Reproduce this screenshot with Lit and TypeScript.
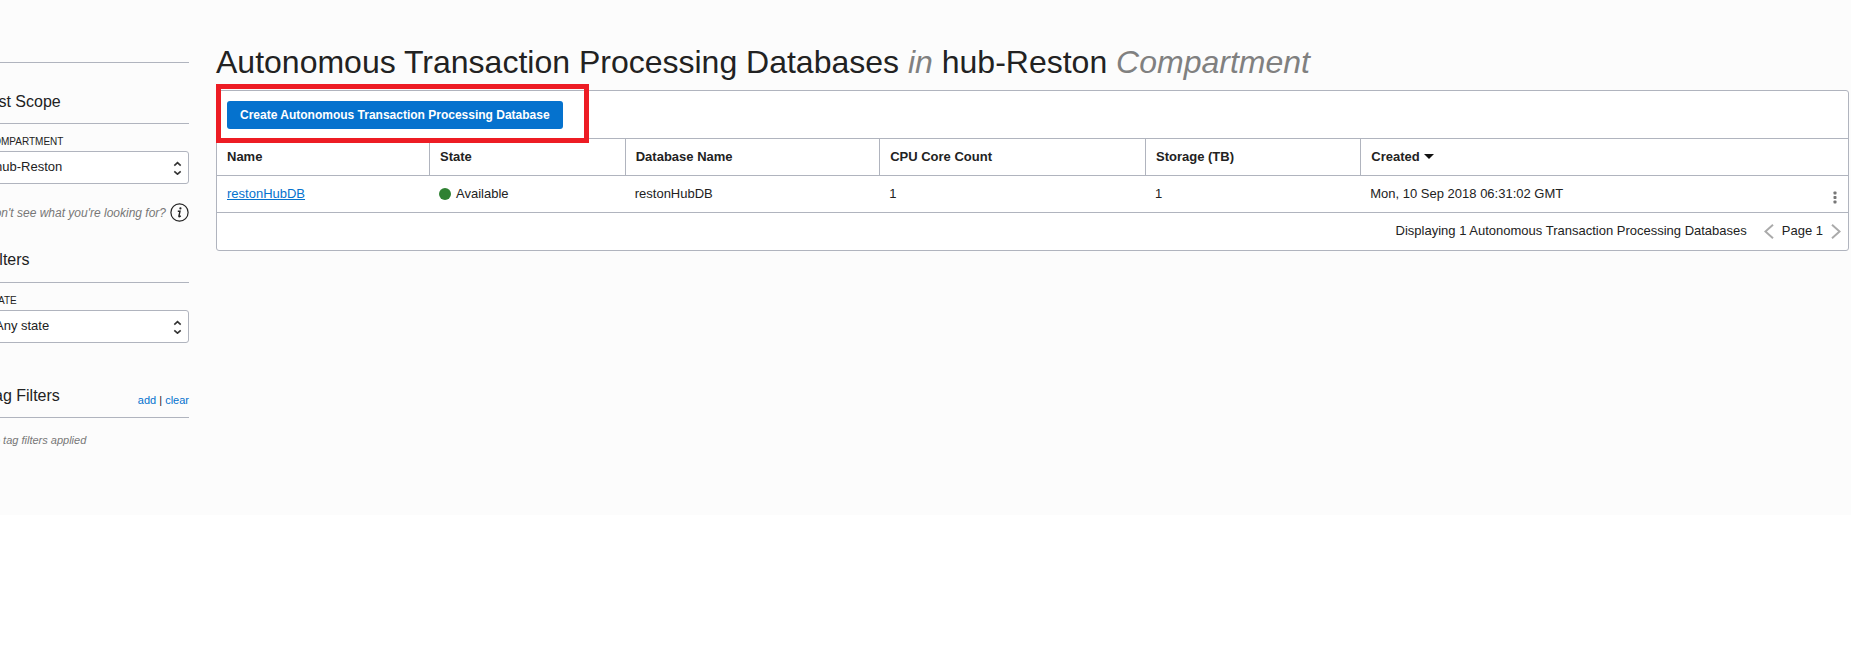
import { LitElement, html, css } from "lit";
import { customElement, property } from "lit/decorators.js";

@customElement("scope-select")
class ScopeSelect extends LitElement {
  @property() label = "";
  @property() value = "";

  static styles = css`
    :host {
      display: block;
    }
    .label {
      display: block;
      font-size: 10px;
      line-height: 12px;
      text-transform: uppercase;
      margin-bottom: 3px;
    }
    .box {
      display: grid;
      align-items: center;
    }
    .select {
      grid-area: 1 / 1;
      appearance: none;
      width: 100%;
      height: 33px;
      margin: 0;
      padding: 0 28px 2px 8px;
      border: 1px solid #b0b4be;
      border-radius: 3px;
      background: #fff;
      color: #222;
      font: inherit;
      font-size: 13px;
    }
    .arrows {
      grid-area: 1 / 1;
      justify-self: end;
      margin-right: 7px;
      pointer-events: none;
    }
  `;

  render() {
    return html`
      <label class="label" for="field">${this.label}</label>
      <div class="box">
        <select class="select" id="field">
          <option>${this.value}</option>
        </select>
        <svg class="arrows" width="9" height="14" viewBox="0 0 9 14" fill="none" stroke="#333" stroke-width="1.6">
          <path d="M1.3 4.6 4.5 1.6 7.7 4.6M1.3 10.4 4.5 13.2 7.7 10.4" />
        </svg>
      </div>
    `;
  }
}

interface Database {
  name: string;
  state: string;
  dbName: string;
  cores: number;
  storage: number;
  created: string;
}

@customElement("app-root")
class AppRoot extends LitElement {
  private rows: Database[] = [
    {
      name: "restonHubDB",
      state: "Available",
      dbName: "restonHubDB",
      cores: 1,
      storage: 1,
      created: "Mon, 10 Sep 2018 06:31:02 GMT",
    },
  ];

  static styles = css`
    :host {
      display: block;
      min-height: 100vh;
      overflow-x: hidden;
      background: #fff;
      color: #222;
      font-family: "Liberation Sans", Arial, sans-serif;
      font-size: 13px;
      line-height: 16px;
    }
    .page {
      display: flex;
      gap: 27px;
      box-sizing: border-box;
      padding: 40px 2px 68px 0;
      background: #fcfcfc;
    }
    .side {
      flex: none;
      width: 203px;
      margin-left: -14px;
      padding-top: 22px;
    }
    .heading {
      display: flex;
      align-items: flex-end;
      justify-content: space-between;
      margin: 0;
      border-bottom: 1px solid #b0b4be;
      font-size: 16px;
      font-weight: normal;
      line-height: 20px;
    }
    .scope {
      border-top: 1px solid #b0b4be;
      padding: 29px 0 11px;
    }
    .filters {
      padding: 28px 0 12px;
    }
    .tags {
      padding: 43px 0 11px;
    }
    .field {
      margin-top: 12px;
    }
    .hint {
      display: flex;
      align-items: center;
      justify-content: space-between;
      margin-top: 19px;
      color: #777;
      font-size: 12px;
      font-style: italic;
      white-space: nowrap;
    }
    .info {
      display: block;
      padding: 0;
      border: 0;
      background: none;
    }
    .info svg {
      display: block;
    }
    .links {
      font-size: 11px;
      line-height: 12px;
    }
    .none {
      margin: 15px 0 0;
      color: #777;
      font-size: 11px;
      font-style: italic;
      line-height: 14px;
    }
    .link {
      color: #0572ce;
      text-decoration: none;
    }
    .underlined {
      text-decoration: underline;
    }
    .main {
      flex: 1;
      min-width: 0;
    }
    .title {
      margin: 0 0 6px;
      font-size: 32px;
      font-weight: normal;
      line-height: 44px;
      white-space: nowrap;
    }
    .soft {
      color: #808080;
    }
    .panel {
      border: 1px solid #b0b4be;
      border-radius: 3px;
      background: #fff;
    }
    .toolbar {
      display: flex;
      padding: 10px 10px 9px;
    }
    .callout {
      position: relative;
    }
    .callout::after {
      content: "";
      position: absolute;
      inset: -17px -26px -14px -11px;
      border: 5px solid #ed1c24;
      pointer-events: none;
    }
    .create {
      display: block;
      height: 28px;
      padding: 0 13px 1px;
      border: 0;
      border-radius: 3px;
      background: #0572ce;
      color: #fff;
      font: inherit;
      font-size: 12px;
      font-weight: bold;
      white-space: nowrap;
    }
    .table {
      width: 100%;
      table-layout: fixed;
      border-collapse: separate;
      border-spacing: 0;
      border-top: 1px solid #b0b4be;
    }
    .th,
    .td {
      box-sizing: border-box;
      height: 37px;
      padding: 0 10px;
      border-bottom: 1px solid #b0b4be;
      text-align: left;
      white-space: nowrap;
    }
    .th + .th {
      border-left: 1px solid #b0b4be;
    }
    .th.plain {
      border-left: 0;
    }
    .c-name {
      width: 13%;
    }
    .c-state {
      width: 12%;
    }
    .c-db {
      width: 15.6%;
    }
    .c-cpu {
      width: 16.3%;
    }
    .c-storage {
      width: 13.2%;
    }
    .c-menu {
      width: 28px;
    }
    .caret {
      margin-left: 1px;
      vertical-align: 2px;
    }
    .state {
      display: flex;
      align-items: center;
      gap: 5px;
    }
    .dot {
      width: 12px;
      height: 12px;
      border-radius: 50%;
      background: #2f8132;
    }
    .menu-cell {
      padding: 6px 7px 0 9px;
    }
    .icon {
      display: block;
      padding: 0;
      border: 0;
      background: none;
    }
    .icon svg {
      display: block;
    }
    .foot {
      display: flex;
      align-items: center;
      justify-content: flex-end;
      height: 37px;
      box-sizing: border-box;
      padding: 0 7px 1px 10px;
    }
    .count {
      margin-right: 17px;
    }
    .pager {
      display: flex;
      align-items: center;
      gap: 8px;
    }
  `;

  render() {
    return html`
      <div class="page">
        <aside class="side">
          <h2 class="heading scope">List Scope</h2>
          <scope-select class="field" label="Compartment" value="hub-Reston"></scope-select>
          <div class="hint">
            <span>Don't see what you're looking for?</span>
            <button class="info" aria-label="More information">
              <svg width="19" height="19" viewBox="0 0 19 19">
                <circle cx="9.5" cy="9.5" r="8.6" fill="none" stroke="#222" stroke-width="1.2" />
                <circle cx="10.4" cy="5.4" r="1.1" fill="#222" />
                <path d="M7.8 8.3H10L8.9 13.2Q8.9 13.9 9.6 13.6L10.8 12.9" fill="none" stroke="#222" stroke-width="1.4" />
              </svg>
            </button>
          </div>

          <h2 class="heading filters">Filters</h2>
          <scope-select class="field" label="State" value="Any state"></scope-select>

          <h2 class="heading tags">
            Tag Filters
            <span class="links"><a class="link" href="#add">add</a> | <a class="link" href="#clear">clear</a></span>
          </h2>
          <p class="none">No tag filters applied</p>
        </aside>

        <main class="main">
          <h1 class="title">
            Autonomous Transaction Processing Databases <em class="soft">in</em> hub-Reston
            <em class="soft">Compartment</em>
          </h1>
          <section class="panel">
            <div class="toolbar">
              <div class="callout">
                <button class="create">Create Autonomous Transaction Processing Database</button>
              </div>
            </div>
            <table class="table">
              <thead>
                <tr>
                  <th class="th c-name">Name</th>
                  <th class="th c-state">State</th>
                  <th class="th c-db">Database Name</th>
                  <th class="th c-cpu">CPU Core Count</th>
                  <th class="th c-storage">Storage (TB)</th>
                  <th class="th" aria-sort="descending">
                    Created
                    <svg class="caret" width="10" height="5" viewBox="0 0 10 5"><path d="M0 0H10L5 5Z" fill="#111" /></svg>
                  </th>
                  <th class="th plain c-menu"></th>
                </tr>
              </thead>
              <tbody>
                ${this.rows.map(
                  (row) => html`
                    <tr>
                      <td class="td"><a class="link underlined" href="#db">${row.name}</a></td>
                      <td class="td"><span class="state"><span class="dot"></span>${row.state}</span></td>
                      <td class="td">${row.dbName}</td>
                      <td class="td">${row.cores}</td>
                      <td class="td">${row.storage}</td>
                      <td class="td">${row.created}</td>
                      <td class="td menu-cell">
                        <button class="icon" aria-label="Actions">
                          <svg width="12" height="13" viewBox="0 0 12 13" fill="#777">
                            <rect x="4.5" y="0.5" width="3" height="3" rx="0.8" />
                            <rect x="4.5" y="5" width="3" height="3" rx="0.8" />
                            <rect x="4.5" y="9.5" width="3" height="3" rx="0.8" />
                          </svg>
                        </button>
                      </td>
                    </tr>
                  `
                )}
              </tbody>
            </table>
            <div class="foot">
              <span class="count">Displaying 1 Autonomous Transaction Processing Databases</span>
              <nav class="pager" aria-label="Pages">
                <button class="icon" aria-label="Previous page">
                  <svg width="10" height="15" viewBox="0 0 10 15" fill="none" stroke="#aaa" stroke-width="2">
                    <path d="M9 .8 1.4 7.5 9 14.2" />
                  </svg>
                </button>
                <span>Page 1</span>
                <button class="icon" aria-label="Next page">
                  <svg width="10" height="15" viewBox="0 0 10 15" fill="none" stroke="#aaa" stroke-width="2">
                    <path d="M1 .8 8.6 7.5 1 14.2" />
                  </svg>
                </button>
              </nav>
            </div>
          </section>
        </main>
      </div>
    `;
  }
}
